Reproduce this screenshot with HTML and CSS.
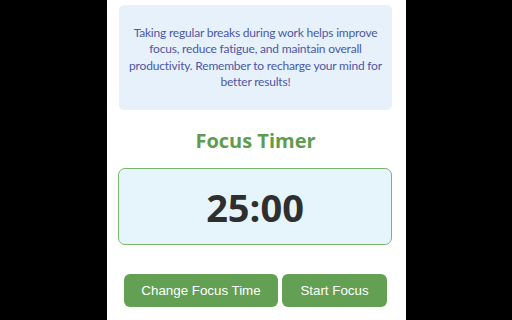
FILE: index.html
```html
<!DOCTYPE html>
<html>
<head>
<meta charset="utf-8">
<link rel="stylesheet" href="styles.css">
</head>
<body>
<div class="panel">
  <div class="info">
    <p>Taking regular breaks during work helps improve focus, reduce fatigue, and maintain overall productivity. Remember to recharge your mind for better results!</p>
  </div>
  <h1 class="title">Focus Timer</h1>
  <div class="timer">25:00</div>
  <div class="actions">
    <button class="btn btn-change">Change Focus Time</button>
    <button class="btn btn-start">Start Focus</button>
  </div>
</div>
</body>
</html>
```

FILE: styles.css
```css
html, body {
  margin: 0;
  padding: 0;
  background: #000;
  height: 100%;
}
body {
  display: flex;
  justify-content: center;
}
.panel {
  width: 299px;
  margin-left: 1px;
  background: #fff;
  box-sizing: border-box;
  padding: 5px 14px 0 12px;
  height: 320px;
  font-family: "Open Sans", "Noto Sans", sans-serif;
}
.info {
  background: #e7f1fc;
  border-radius: 5px;
  height: 105px;
  box-sizing: border-box;
  display: flex;
  align-items: center;
  justify-content: center;
  padding: 0 6px;
}
.info p {
  margin: 0;
  text-align: center;
  color: #4c58a4;
  font-family: Lato, "Open Sans", sans-serif;
  font-size: 12px;
  letter-spacing: -0.2px;
  line-height: 16.5px;
}
.title {
  margin: 10px 0 0;
  height: 42px;
  line-height: 42px;
  text-align: center;
  color: #5f9c4d;
  font-size: 20px;
  font-weight: 700;
}
.timer {
  margin: 6px 0 0 -1px;
  height: 77px;
  box-sizing: border-box;
  border: 1.5px solid #79b86b;
  border-radius: 7px;
  background: #e6f5fb;
  display: flex;
  align-items: center;
  justify-content: center;
  color: #2f2f2f;
  font-size: 38px;
  font-weight: 700;
}
.actions {
  margin-top: 29px;
  display: flex;
  justify-content: center;
  gap: 4px;
}
.btn {
  height: 33px;
  border: none;
  border-radius: 6px;
  background: #63a054;
  color: #fff;
  font-family: "Liberation Sans", Arial, sans-serif;
  font-size: 13.33px;
  padding: 0;
}
.btn-change { width: 154px; }
.btn-start { width: 105px; }
```
